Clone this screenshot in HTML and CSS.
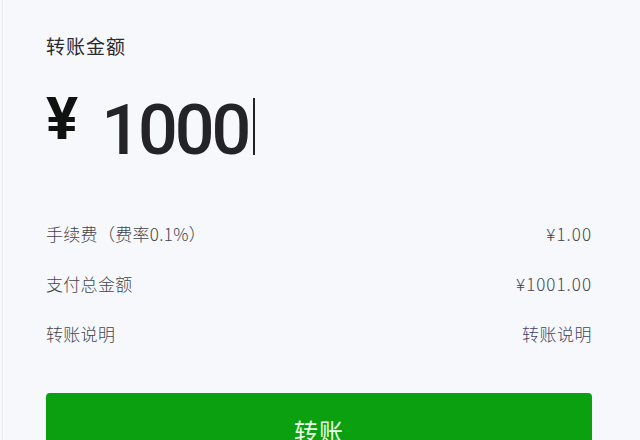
FILE: index.html
```html
<!DOCTYPE html>
<html lang="zh">
<head>
<meta charset="utf-8">
<link rel="stylesheet" href="styles.css">
</head>
<body>
<div class="page">
  <div class="title">转账金额</div>
  <div class="amount">
    <span class="yen">¥</span>
    <span class="num">1000</span>
    <span class="cursor"></span>
  </div>
  <div class="rows">
    <div class="row"><span class="label">手续费（费率0.1%）</span><span class="value">¥1.00</span></div>
    <div class="row"><span class="label">支付总金额</span><span class="value">¥1001.00</span></div>
    <div class="row"><span class="label">转账说明</span><span class="value link">转账说明</span></div>
  </div>
  <div class="btn">转账</div>
</div>
</body>
</html>
```
FILE: styles.css
```css
html, body {
  margin: 0;
  padding: 0;
  background: #f6f8fb;
  height: 100%;
  overflow: hidden;
}
.page {
  padding: 34px 48px 0 43px;
  font-family: "Noto Sans CJK SC", "Noto Sans", sans-serif;
  border-left: 1px solid #e9ecf0;
  margin-left: 2px;
  min-height: 100%;
}
.title {
  font-size: 19px;
  line-height: 24px;
  color: #2a2a30;
  letter-spacing: 1px;
}
.amount {
  display: flex;
  align-items: flex-start;
  margin-top: 34px;
  height: 70px;
}
.yen {
  font-family: Roboto, sans-serif;
  font-weight: 700;
  font-size: 60px;
  line-height: 58px;
  color: #111;
  margin-top: -2px;
}
.num {
  font-family: Roboto, sans-serif;
  font-weight: 500;
  font-size: 70px;
  line-height: 70px;
  color: #232328;
  letter-spacing: -3px;
  margin-left: 23px;
  margin-top: 3px;
}
.cursor {
  width: 2px;
  height: 57px;
  background: #222;
  margin-left: 5px;
  margin-top: 6px;
}
.rows {
  margin-top: 46px;
}
.row {
  display: flex;
  justify-content: space-between;
  align-items: center;
  height: 50px;
  font-size: 17px;
  font-weight: 300;
  color: #45454d;
}
.label {
  letter-spacing: 0.3px;
}
.value {
  letter-spacing: 1px;
}
.link {
  color: #3f4268;
  letter-spacing: 0.5px;
}
.btn {
  margin-top: 35px;
  height: 76px;
  line-height: 76px;
  background: #0aa010;
  border-radius: 4px;
  text-align: center;
  color: #e6ffe6;
  font-size: 24px;
  letter-spacing: 1px;
}
```
